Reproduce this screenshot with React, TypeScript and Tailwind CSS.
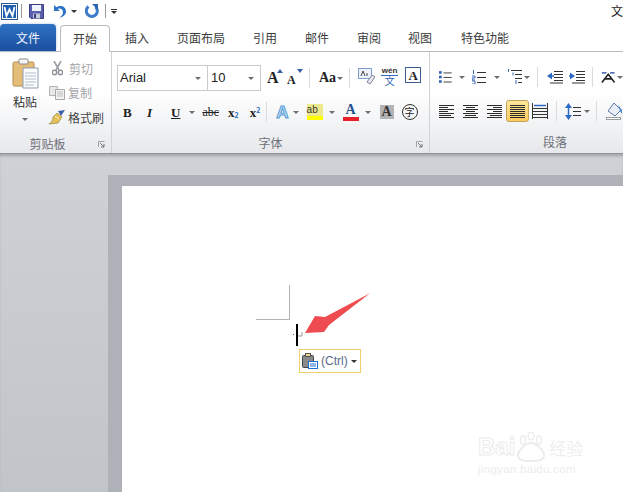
import React from "react";

const Caret = ({ className = "" }: { className?: string }) => (
  <span className={`inline-block w-0 h-0 border-x-[3px] border-x-transparent border-t-[3px] border-t-[#6b6e73] ${className}`} />
);

const WordIcon = () => (
  <svg width="17" height="17" viewBox="0 0 17 17">
    <rect x="0.500" y="0.500" width="16" height="16" fill="#fff" stroke="#2b5797" />
    <rect x="2" y="2" width="13" height="13" fill="#1f5fb0" />
    <path d="M3.500 4L5.500 13L8.500 6.500L11.500 13L13.500 4" fill="none" stroke="#fff" strokeWidth="1.800" />
  </svg>
);

const SaveIcon = () => (
  <svg width="15" height="15" viewBox="0 0 15 15">
    <path d="M0.500 0.500H14.500V14.500H2L0.500 13Z" fill="#5a5fae" stroke="#3a3d80" />
    <rect x="3" y="1" width="9" height="6" fill="#f2f4fb" />
    <rect x="4" y="9.500" width="7" height="5" fill="#c8cbe0" />
    <rect x="5" y="10" width="2" height="4" fill="#3a3d80" />
  </svg>
);

const UndoIcon = () => (
  <svg width="15" height="15" viewBox="0 0 15 15">
    <path d="M2 1V7H8L5.700 4.900C8 3.600 11 5 11 8C11 10 10 12 7.500 13.500C12 13 14 10 14 7.500C14 2.500 8.500 0.500 4.500 3.300Z" fill="#2a73c8" />
  </svg>
);

const RedoIcon = () => (
  <svg width="14" height="15" viewBox="0 0 14 15">
    <path d="M3.500 2.500A5.500 5.500 0 1 0 10.500 2.800" fill="none" stroke="#3d7cc9" strokeWidth="3" />
    <path d="M7 0H13V6Z" fill="#2a66b5" />
  </svg>
);

const PasteIcon = () => (
  <svg width="27" height="31" viewBox="0 0 27 31">
    <rect x="1" y="4" width="21" height="24" rx="1.500" fill="#e6bd78" stroke="#b08a4c" />
    <rect x="7" y="1" width="9" height="5" rx="1" fill="#f6f6f6" stroke="#8a8a8a" />
    <path d="M11 10H26V30H11Z" fill="#fbfcfe" stroke="#8d9bb0" />
    <path d="M13 15H24M13 18H24M13 21H24M13 24H24M13 27H22" stroke="#b4bdcb" />
  </svg>
);

const ScissorsIcon = () => (
  <svg width="11" height="15" viewBox="0 0 11 15">
    <path d="M2 0L7 9M9 0L4 9" stroke="#9a9da3" strokeWidth="1.600" />
    <circle cx="2.500" cy="11.500" r="2.200" fill="none" stroke="#8f9298" strokeWidth="1.500" />
    <circle cx="8.500" cy="11.500" r="2.200" fill="none" stroke="#8f9298" strokeWidth="1.500" />
  </svg>
);

const CopyIcon = () => (
  <svg width="16" height="14" viewBox="0 0 16 14">
    <path d="M0.500 0.500H8.500V9.500H0.500Z" fill="#e8e8e8" stroke="#b3b3b3" />
    <path d="M6.500 3.500H15.500V13.500H6.500Z" fill="#f2f2f2" stroke="#a8a8a8" />
    <path d="M8 6H14M8 8H14M8 10H14" stroke="#bdbdbd" />
  </svg>
);

const BrushIcon = () => (
  <svg width="17" height="15" viewBox="0 0 17 15">
    <path d="M9 1L16 0L12 6Z" fill="#3b62a8" />
    <path d="M8 3L13 7L9 13L0 14C3 12 4 10 4 7Z" fill="#e2c15b" stroke="#8d7632" strokeWidth="0.600" />
    <path d="M6 6L10 9" stroke="#fff3b0" />
  </svg>
);

const SizeIcon = ({ big }: { big: boolean }) => (
  <span className="relative flex items-end h-[18px] w-[16px]">
    <span className={`font-['Liberation_Serif',serif] font-bold text-[#222] leading-none ${big ? "text-[16px]" : "text-[12px]"}`}>A</span>
    <svg className="absolute right-0 top-[1px]" width="6" height="4" viewBox="0 0 6 4">
      <path d={big ? "M0 4L3 0L6 4Z" : "M0 0L3 4L6 0Z"} fill="#3a5fa8" />
    </svg>
  </span>
);

const Glyph = ({ children, className = "" }: { children: React.ReactNode; className?: string }) => (
  <span className={`font-['Liberation_Serif',serif] font-bold text-[#222] leading-none ${className}`}>{children}</span>
);

const Sep = ({ className = "" }: { className?: string }) => <span className={`w-px bg-[#d9dbde] ${className}`} />;

const lines = (rows: [number, number][], start: number, gap: number) =>
  rows.map(([a, b], i) => `M${a} ${start + i * gap + 0.500}H${b}`).join("");

const AlignIcon = ({ rows }: { rows: [number, number][] }) => (
  <svg width="15" height="13" viewBox="0 0 15 13">
    <path d={lines(rows, 0, 2)} stroke="#2b2b2b" fill="none" />
  </svg>
);

const ListIcon = ({ kind }: { kind: number }) => (
  <svg width="14" height="14" viewBox="0 0 14 14">
    {kind === 0 && (
      <>
        <rect x="0" y="0.500" width="3" height="3" fill="#3a69b5" />
        <rect x="0" y="5.500" width="3" height="3" fill="#3a69b5" />
        <rect x="0" y="10.500" width="3" height="3" fill="#3a69b5" />
      </>
    )}
    {kind === 1 && <path d="M1.500 0V4M0 6H3V8H0V10H3M0 11H3V14H0" fill="none" stroke="#3a69b5" />}
    <path d="M5 2.500H14M5 7.500H14M5 12.500H14" stroke="#333" />
  </svg>
);

const MultiList = () => (
  <svg width="16" height="16" viewBox="0 0 16 16">
    <path d="M1.500 0V3M6 3.500V6.500M9 11V15" stroke="#3a69b5" />
    <path d="M4 1.500H15M8 5.500H15M8 9.500H15M11 13.500H15" stroke="#333" />
  </svg>
);

const IndentIcon = ({ flip }: { flip: boolean }) => (
  <svg width="16" height="14" viewBox="0 0 16 14">
    <path d="M7 1.500H16M7 4.500H16M7 7.500H16M7 10.500H16M3 13H16" stroke="#333" />
    {flip ? (
      <>
        <path d="M6 6L1 2.500V9.500Z" fill="#2f6bc4" />
        <path d="M0 6H4" stroke="#2f6bc4" strokeWidth="1.500" />
      </>
    ) : (
      <>
        <path d="M0 6L5 2.500V9.500Z" fill="#2f6bc4" />
        <path d="M3 6H7" stroke="#2f6bc4" strokeWidth="1.500" />
      </>
    )}
  </svg>
);

const Paragraph = () => (
  <div className="w-[193px] shrink-0 flex flex-col">
    <div className="h-[42px] pt-[8px] flex items-center pl-[9px]">
      <ListIcon kind={0} />
      <Caret className="ml-[7px]" />
      <span className="ml-[7px] flex"><ListIcon kind={1} /></span>
      <Caret className="ml-[8px]" />
      <span className="ml-[7px] flex"><MultiList /></span>
      <Caret className="ml-[1px]" />
      <Sep className="h-[20px] ml-[7px]" />
      <span className="ml-[9px] flex"><IndentIcon flip={false} /></span>
      <span className="ml-[6px] flex"><IndentIcon flip={true} /></span>
      <Sep className="h-[20px] ml-[7px]" />
      <svg className="ml-[8px]" width="16" height="14" viewBox="0 0 16 14">
        <path d="M1 13L8 4L15 13M4 9H12" fill="none" stroke="#222" strokeWidth="1.800" />
        <path d="M1 2.500H6M10 2.500H15" stroke="#1b3f96" strokeWidth="1.500" />
      </svg>
      <Caret className="ml-[2px]" />
    </div>
    <div className="h-[34px] flex items-center pl-[9px]">
      <AlignIcon rows={[[0, 15], [0, 9], [0, 15], [0, 9], [0, 15], [0, 12], [0, 15]]} />
      <span className="ml-[9px] flex"><AlignIcon rows={[[0, 15], [3, 12], [0, 15], [3, 12], [0, 15], [2, 13], [0, 15]]} /></span>
      <span className="ml-[9px] flex"><AlignIcon rows={[[0, 15], [6, 15], [0, 15], [6, 15], [0, 15], [3, 15], [0, 15]]} /></span>
      <span className="ml-[4px] w-[23px] h-[22px] flex items-center justify-center rounded-[3px] border border-[#c2a25b] bg-gradient-to-b from-[#fde89a] to-[#fbc95c]">
        <AlignIcon rows={[[0, 15], [0, 15], [0, 15], [0, 15], [0, 15], [0, 15], [0, 15]]} />
      </span>
      <svg className="ml-[3px]" width="16" height="16" viewBox="0 0 16 16">
        <path d="M1 5.500H15M1 8.500H15M1 11.500H15M1 14.500H15M0.500 0V16M15.500 0V16" stroke="#333" />
        <path d="M2 2.500H14" stroke="#2f6bc4" strokeWidth="1.500" />
      </svg>
      <Sep className="h-[20px] ml-[8px]" />
      <svg className="ml-[8px]" width="7" height="17" viewBox="0 0 7 17">
        <path d="M3.500 0L7 5H0ZM3.500 17L7 12H0Z" fill="#2f6bc4" />
        <path d="M3.500 4V13" stroke="#2f6bc4" strokeWidth="1.500" />
      </svg>
      <svg className="ml-[1px]" width="8" height="9" viewBox="0 0 8 9">
        <path d="M0 0.500H8M0 4.500H8M0 8.500H8" stroke="#333" />
      </svg>
      <Caret className="ml-[3px]" />
      <Sep className="h-[20px] ml-[6px]" />
      <svg className="ml-[9px]" width="17" height="18" viewBox="0 0 17 18">
        <path d="M8 1L15 8L9 14L2 9Z" fill="#e9eef6" stroke="#5b7bb0" />
        <path d="M12 3L16 8V12L14 9Z" fill="#4d86cf" />
        <rect x="0.500" y="15.500" width="14" height="2" fill="#fff" stroke="#9a9da2" />
      </svg>
    </div>
    <div className="flex-1 flex items-center justify-center pl-[57px] text-[12px] text-[#6d7079] pt-[3px]">段落</div>
  </div>
);

const GroupLauncher = () => (
  <svg className="absolute right-[6px] bottom-[5px]" width="7" height="7" viewBox="0 0 7 7">
    <path d="M0.500 6V0.500H6.500" fill="none" stroke="#a0a3a8" />
    <path d="M2 2L6 6M6 3V6H3" fill="none" stroke="#70737a" />
  </svg>
);

const tabs: [string, string][] = [
  ["插入", "w-[24px] ml-[15px]"],
  ["页面布局", "w-[48px] ml-[28px]"],
  ["引用", "w-[24px] ml-[28px]"],
  ["邮件", "w-[24px] ml-[28px]"],
  ["审阅", "w-[24px] ml-[28px]"],
  ["视图", "w-[24px] ml-[27px]"],
  ["特色功能", "w-[48px] ml-[29px]"],
];

export default function App() {
  return (
    <div className="w-[623px] h-[492px] overflow-hidden bg-white flex flex-col relative font-['Noto_Sans_CJK_SC','Liberation_Sans',sans-serif] text-[12px] text-[#444]">
      {/* quick access bar */}
      <div className="h-[25px] shrink-0 flex items-center pl-px pb-[3px] bg-white">
        <WordIcon />
        <span className="w-px h-[14px] bg-[#999] ml-[3px]" />
        <span className="ml-[7px] flex"><SaveIcon /></span>
        <span className="ml-[8px] flex"><UndoIcon /></span>
        <Caret className="ml-[4px] border-t-[#333]" />
        <span className="ml-[8px] flex"><RedoIcon /></span>
        <span className="w-px h-[14px] bg-[#999] ml-[6px]" />
        <span className="ml-[5px] flex flex-col gap-[1px]">
          <span className="w-[6px] h-px bg-[#333]" />
          <Caret className="border-t-[#333]" />
        </span>
        <span className="ml-auto w-[12px] whitespace-nowrap text-[12px] leading-none text-[#222]">文</span>
      </div>

      {/* tab strip */}
      <div className="h-[27px] shrink-0 flex items-end border-b border-[#b9bcc1] bg-white relative">
        <div className="w-[56px] h-[27px] flex items-center justify-center rounded-t-[4px] bg-gradient-to-b from-[#2f72c4] to-[#1c4f9f] text-[#f2f6fc] text-[12px] shadow-[0_0_3px_#a9c1de]">文件</div>
        <div className="ml-[4px] w-[50px] h-[27px] -mb-px flex items-center justify-center rounded-t-[4px] border border-b-0 border-[#b9bcc1] bg-white text-[12px] text-[#3b3b3b]">开始</div>
        {tabs.map(([label, cls]) => (
          <div key={label} className={`${cls} h-[26px] flex items-center justify-center whitespace-nowrap text-[12px] text-[#3b3b3b]`}>{label}</div>
        ))}
      </div>

      {/* ribbon */}
      <div className="h-[102px] shrink-0 flex bg-gradient-to-b from-white from-40% to-[#e6e8eb] border-b border-[#8f9297] overflow-hidden">
        {/* clipboard */}
        <div className="w-[112px] shrink-0 border-r border-[#cfd2d6] relative flex flex-col">
          <div className="h-[82px] flex">
            <div className="w-[48px] flex flex-col items-center pt-[6px] pl-[2px]">
              <PasteIcon />
              <span className="mt-[5px] text-[12px] leading-[16px] text-[#333]">粘贴</span>
              <Caret className="mt-[8px]" />
            </div>
            <div className="flex flex-col pt-[8px] text-[12px] gap-[7px] leading-[17px]">
              <div className="flex items-center gap-[6px] pl-[4px] text-[#a3a5a9]"><ScissorsIcon /><span>剪切</span></div>
              <div className="flex items-center gap-[3px] pl-px text-[#a3a5a9]"><CopyIcon /><span>复制</span></div>
              <div className="flex items-center gap-[2px] pl-px pt-[1px] text-[#444]"><BrushIcon /><span>格式刷</span></div>
            </div>
          </div>
          <div className="flex-1 flex items-center justify-center pr-[16px] pt-[1px] text-[#6d7079]">剪贴板</div>
          <GroupLauncher />
        </div>

        {/* font */}
        <div className="w-[318px] shrink-0 border-r border-[#cfd2d6] relative flex flex-col pl-[5px]">
          <div className="h-[36px] pt-[13px] flex items-start">
            <div className="w-[91px] h-[26px] flex items-center justify-between border border-[#c8cbd0] bg-white pl-[2px] pr-[6px] font-['Liberation_Sans',sans-serif] text-[13px] text-[#222]">Arial<Caret /></div>
            <div className="w-[53px] h-[26px] flex items-center justify-between border border-l-0 border-[#c8cbd0] bg-white pl-[3px] pr-[6px] font-['Liberation_Sans',sans-serif] text-[13px] text-[#222]">10<Caret /></div>
            <span className="ml-[6px] mt-[3px]"><SizeIcon big={true} /></span>
            <span className="ml-[4px] mt-[3px]"><SizeIcon big={false} /></span>
            <Sep className="h-[20px] ml-[6px] mt-[3px]" />
            <span className="ml-[9px] mt-[6px] flex items-center gap-[1px]"><Glyph className="text-[14px]">Aa</Glyph><Caret /></span>
            <Sep className="h-[20px] ml-[6px] mt-[3px]" />
            <svg className="ml-[8px] mt-[3px]" width="17" height="17" viewBox="0 0 17 17">
              <rect x="0.500" y="0.500" width="13" height="10" fill="#eef3fb" stroke="#7b9ccc" />
              <path d="M9 14L14 7L17 9L12 16Z" fill="#e8e8ee" stroke="#7b83a3" />
              <path d="M3 8L5 3L7 8M9 8V5" fill="none" stroke="#444" />
            </svg>
            <span className="ml-[6px] mt-[2px] w-[17px] flex flex-col items-center">
              <span className="font-['Liberation_Sans',sans-serif] font-bold text-[8px] leading-[8px] text-[#333]">wén</span>
              <span className="h-px w-full bg-[#2f6bc4]" />
              <span className="text-[10px] leading-[10px] text-[#2f5fb0]">文</span>
            </span>
            <span className="ml-[7px] mt-[2px] w-[16px] h-[16px] flex items-center justify-center border border-[#3d5f8f]"><Glyph className="text-[13px]">A</Glyph></span>
          </div>
          <div className="h-[44px] flex items-center pt-[4px]">
            <Glyph className="w-[12px] ml-[6px] text-[13px]">B</Glyph>
            <Glyph className="w-[10px] ml-[12px] text-[13px] italic">I</Glyph>
            <Glyph className="ml-[14px] text-[13px] underline">U</Glyph>
            <Caret className="ml-[9px]" />
            <Glyph className="ml-[7px] text-[12px] line-through font-normal">abc</Glyph>
            <span className="ml-[9px] flex items-end"><Glyph className="text-[13px]">x</Glyph><span className="text-[7px] leading-[8px] font-bold text-[#2f6bc4]">2</span></span>
            <span className="ml-[11px] flex items-start"><Glyph className="text-[13px]">x</Glyph><span className="text-[7px] leading-[8px] font-bold text-[#2f6bc4]">2</span></span>
            <Sep className="h-[20px] ml-[6px]" />
            <span className="ml-[9px] font-['Liberation_Sans',sans-serif] font-bold text-[17px] leading-none text-[#bfe0fb] [-webkit-text-stroke:1px_#5b9bd5]">A</span>
            <Caret className="ml-[4px]" />
            <span className="ml-[8px] flex flex-col w-[16px]">
              <span className="h-[12px] leading-[12px] text-[10px] bg-[#ece98c] text-[#333] font-['Liberation_Sans',sans-serif]">ab</span>
              <span className="h-[4px] bg-[#ffff00]" />
            </span>
            <Caret className="ml-[6px]" />
            <span className="ml-[8px] flex flex-col items-center w-[16px]">
              <Glyph className="text-[14px] text-[#25508f]">A</Glyph>
              <span className="h-[4px] w-full bg-[#e8202a]" />
            </span>
            <Caret className="ml-[6px]" />
            <span className="ml-[9px] w-[14px] h-[14px] flex items-center justify-center bg-[#b3b3b3]"><Glyph className="text-[14px] text-[#333]">A</Glyph></span>
            <span className="ml-[8px] w-[16px] h-[16px] flex items-center justify-center rounded-full border border-[#333] text-[10px] leading-none text-[#222]">字</span>
          </div>
          <div className="flex-1 flex items-center justify-center pr-[5px] text-[#6d7079]">字体</div>
          <GroupLauncher />
        </div>

        <Paragraph />
      </div>

      {/* document canvas */}
      <div className="flex-1 flex flex-col pl-[108px] pt-[21px] bg-gradient-to-b from-[#ced1d6] to-[#c1c5ca] shadow-[inset_0_3px_3px_-1px_#a3a6ab] relative">
        <div className="flex-1 flex flex-col pl-[14px] pt-[11px] bg-[#aeb2b8]">
          <div className="flex-1 bg-white" />
        </div>

        {/* crop mark */}
        <div className="absolute left-[256px] top-[131px] w-[34px] h-[35px] border-r border-b border-[#b3b3b3]" />
        {/* caret and paragraph mark */}
        <div className="absolute left-[296px] top-[170px] w-[2px] h-[22px] bg-black" />
        <div className="absolute left-[293px] top-[180px] w-[1px] h-[1px] bg-[#7a5a3a]" />
        <svg className="absolute left-[297px] top-[178px]" width="6" height="7" viewBox="0 0 6 7">
          <path d="M5 0V4H1" fill="none" stroke="#9a9a9a" />
        </svg>
        {/* red arrow */}
        <svg className="absolute left-[300px] top-[138px]" width="72" height="46" viewBox="0 0 72 46">
          <path d="M70 1.300L25 25L15 24L5 41L24 40L29 33Z" fill="#ee4c50" />
        </svg>
        {/* paste options */}
        <div className="absolute left-[299px] top-[195px] w-[62px] h-[24px] flex items-center bg-white border border-[#f0cf6a] pl-[2px]">
          <svg width="16" height="16" viewBox="0 0 16 16">
            <rect x="0.500" y="2.500" width="11" height="12" rx="1" fill="#8a8a8a" stroke="#444" />
            <rect x="3.500" y="0.500" width="5" height="3" fill="#ecd58e" stroke="#555" />
            <rect x="6.500" y="8.500" width="9" height="7" fill="#fff" stroke="#1a6fd0" />
            <path d="M8 11H14M8 13H14" stroke="#1a6fd0" />
          </svg>
          <span className="ml-[3px] font-['Liberation_Sans',sans-serif] text-[12px] text-[#5a6a8a]">(Ctrl)</span>
          <Caret className="ml-[3px] border-t-[#333]" />
        </div>
        {/* watermark */}
        <div className="absolute left-[478px] top-[277px] w-[120px] flex flex-col items-start text-white font-['Liberation_Sans',sans-serif] leading-none">
          <div className="flex items-center h-[32px]">
            <span className="text-[24px] font-bold [-webkit-text-stroke:1px_#ececec]">Bai</span>
            <svg className="ml-[1px]" width="30" height="30" viewBox="0 0 30 30">
              <ellipse cx="7" cy="8" rx="2.500" ry="4" fill="none" stroke="#ececec" strokeWidth="1.500" />
              <ellipse cx="15" cy="4" rx="3" ry="4" fill="none" stroke="#ececec" strokeWidth="1.500" />
              <ellipse cx="23" cy="8" rx="2.500" ry="4" fill="none" stroke="#ececec" strokeWidth="1.500" />
              <path d="M15 11C9 11 2 19 2 23C2 29 9 29 15 29C21 29 28 29 28 23C28 19 21 11 15 11Z" fill="none" stroke="#ececec" strokeWidth="2" />
            </svg>
            <span className="ml-[3px] text-[17px] text-[#eeeeee] font-['Noto_Sans_CJK_SC',sans-serif]">经验</span>
          </div>
          <span className="mt-[1px] text-[11.500px] tracking-[0.3px] text-[#ececec]">jingyan.baidu.com</span>
        </div>
      </div>
    </div>
  );
}
